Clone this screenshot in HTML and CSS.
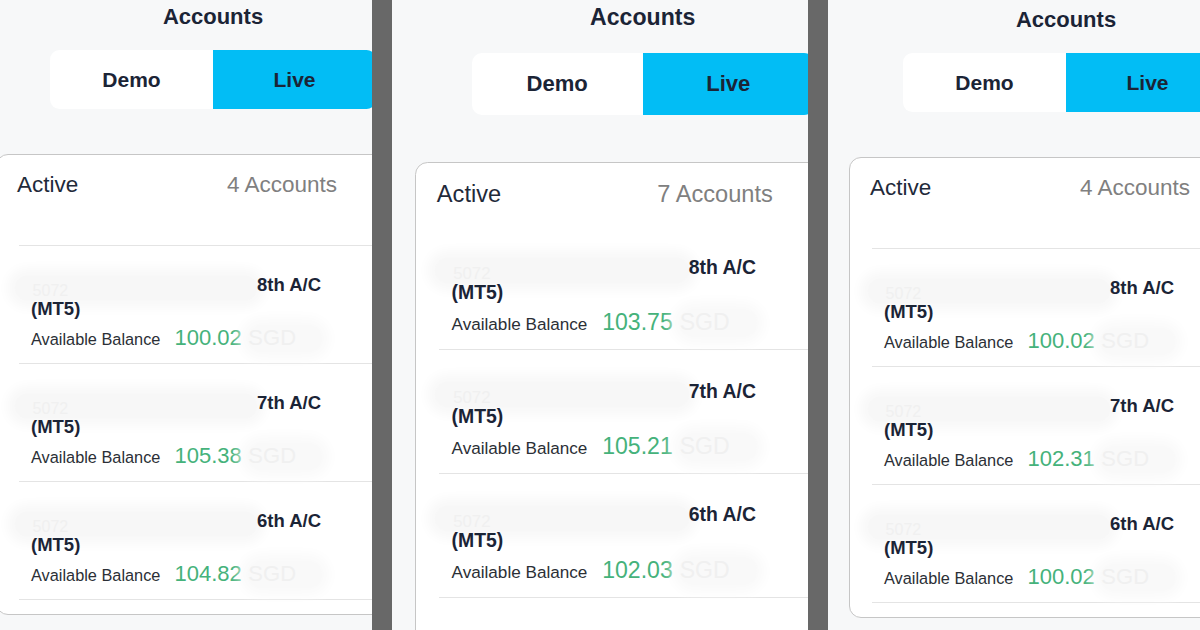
FILE: index.html
```html
<!DOCTYPE html>
<html lang="en">
<head>
<meta charset="utf-8">
<title>Accounts</title>
<link rel="stylesheet" href="styles.css">
</head>
<body>
<div class="strip">

  <section class="panel panel--left">
    <div class="screen">
      <h1 class="title">Accounts</h1>
      <div class="segment">
        <div class="seg seg--off">Demo</div>
        <div class="seg seg--on">Live</div>
      </div>
      <div class="card">
        <div class="card-head">
          <span class="head-label">Active</span>
          <span class="head-count">4 Accounts</span>
        </div>
        <ul class="rows">
          <li class="row">
            <div class="row-top"><span class="acct-id">5072</span><span class="acct-name">8th A/C</span></div>
            <div class="platform">(MT5)</div>
            <div class="bal"><span class="bal-label">Available Balance</span><span class="bal-amt">100.02</span><span class="bal-cur">SGD</span></div>
          </li>
          <li class="row">
            <div class="row-top"><span class="acct-id">5072</span><span class="acct-name">7th A/C</span></div>
            <div class="platform">(MT5)</div>
            <div class="bal"><span class="bal-label">Available Balance</span><span class="bal-amt">105.38</span><span class="bal-cur">SGD</span></div>
          </li>
          <li class="row">
            <div class="row-top"><span class="acct-id">5072</span><span class="acct-name">6th A/C</span></div>
            <div class="platform">(MT5)</div>
            <div class="bal"><span class="bal-label">Available Balance</span><span class="bal-amt">104.82</span><span class="bal-cur">SGD</span></div>
          </li>
        </ul>
      </div>
    </div>
  </section>

  <section class="panel panel--mid">
    <div class="screen">
      <h1 class="title">Accounts</h1>
      <div class="segment">
        <div class="seg seg--off">Demo</div>
        <div class="seg seg--on">Live</div>
      </div>
      <div class="card">
        <div class="card-head">
          <span class="head-label">Active</span>
          <span class="head-count">7 Accounts</span>
        </div>
        <ul class="rows">
          <li class="row">
            <div class="row-top"><span class="acct-id">5072</span><span class="acct-name">8th A/C</span></div>
            <div class="platform">(MT5)</div>
            <div class="bal"><span class="bal-label">Available Balance</span><span class="bal-amt">103.75</span><span class="bal-cur">SGD</span></div>
          </li>
          <li class="row">
            <div class="row-top"><span class="acct-id">5072</span><span class="acct-name">7th A/C</span></div>
            <div class="platform">(MT5)</div>
            <div class="bal"><span class="bal-label">Available Balance</span><span class="bal-amt">105.21</span><span class="bal-cur">SGD</span></div>
          </li>
          <li class="row">
            <div class="row-top"><span class="acct-id">5072</span><span class="acct-name">6th A/C</span></div>
            <div class="platform">(MT5)</div>
            <div class="bal"><span class="bal-label">Available Balance</span><span class="bal-amt">102.03</span><span class="bal-cur">SGD</span></div>
          </li>
        </ul>
      </div>
    </div>
  </section>

  <section class="panel panel--right">
    <div class="screen">
      <h1 class="title">Accounts</h1>
      <div class="segment">
        <div class="seg seg--off">Demo</div>
        <div class="seg seg--on">Live</div>
      </div>
      <div class="card">
        <div class="card-head">
          <span class="head-label">Active</span>
          <span class="head-count">4 Accounts</span>
        </div>
        <ul class="rows">
          <li class="row">
            <div class="row-top"><span class="acct-id">5072</span><span class="acct-name">8th A/C</span></div>
            <div class="platform">(MT5)</div>
            <div class="bal"><span class="bal-label">Available Balance</span><span class="bal-amt">100.02</span><span class="bal-cur">SGD</span></div>
          </li>
          <li class="row">
            <div class="row-top"><span class="acct-id">5072</span><span class="acct-name">7th A/C</span></div>
            <div class="platform">(MT5)</div>
            <div class="bal"><span class="bal-label">Available Balance</span><span class="bal-amt">102.31</span><span class="bal-cur">SGD</span></div>
          </li>
          <li class="row">
            <div class="row-top"><span class="acct-id">5072</span><span class="acct-name">6th A/C</span></div>
            <div class="platform">(MT5)</div>
            <div class="bal"><span class="bal-label">Available Balance</span><span class="bal-amt">100.02</span><span class="bal-cur">SGD</span></div>
          </li>
        </ul>
      </div>
    </div>
  </section>

</div>
</body>
</html>
```
FILE: styles.css
```css
html, body {
  margin: 0;
  padding: 0;
}

body {
  background: #686868;
  font-family: "Liberation Sans", Arial, "Helvetica Neue", sans-serif;
  color: #1b2436;
  width: 1200px;
  height: 630px;
  overflow: hidden;
}

.strip {
  display: grid;
  grid-template-columns: 372px 416px 372px;
  column-gap: 20px;
  height: 630px;
}

.panel {
  background: #f7f8f9;
  overflow: hidden;
  font-size: 16px;
  height: 630px;
}

.panel--left .screen { margin-left: -0.25em; }
.panel--right { padding-top: 3px; }
.panel--right .screen { margin-left: 1.3125em; }
.panel--mid { font-size: 16.8px; }
.panel--mid .screen { margin-left: 1.36em; }

.screen {
  width: 27.125em;
}

.title {
  margin: 0;
  padding-top: 0.1875em;
  font-size: 1.375em;
  line-height: 1.18em;
  font-weight: 700;
  text-align: center;
  color: #1b2436;
}

.segment {
  display: flex;
  margin: 1.25em 0 0 3.375em;
  width: 20.375em;
  height: 3.6875em;
}

.seg {
  flex: 1;
  display: flex;
  align-items: center;
  justify-content: center;
  font-size: 1.3125em;
  font-weight: 700;
  color: #1b2436;
}

.seg--off {
  background: #ffffff;
  border-radius: 0.45em 0 0 0.45em;
}

.seg--on {
  background: #02bdf5;
  border-radius: 0 0.45em 0.45em 0;
}

.card {
  margin-top: 2.8125em;
  width: 30em;
  background: #ffffff;
  border: 1px solid #c6c6c6;
  border-radius: 0.75em;
  padding-bottom: 0.875em;
}

.panel--mid .card { padding-bottom: 4em; }

.card-head {
  display: flex;
  justify-content: space-between;
  align-items: center;
  padding: 1em 6em 2.875em 1.25em;
  width: 20em;
}

.panel--mid .card-head { padding-bottom: 0.97em; }

.head-label,
.head-count {
  font-size: 1.40625em;
  line-height: 1.245em;
}

.head-label { color: #1f2a3a; }
.head-count { color: #808080; }

.rows {
  list-style: none;
  margin: 0 0 0 1.375em;
  padding: 0;
}

.row {
  border-top: 1px solid #e4e4e4;
  padding: 1.6875em 0 0.625em 0.75em;
}

.row:last-child { border-bottom: 1px solid #e4e4e4; }
.panel--mid .row:first-child { border-top-color: transparent; }

.row-top {
  display: flex;
  align-items: center;
  height: 1.5em;
}

.acct-id {
  flex: 0 0 15.125em;
  margin-left: -1em;
  height: 1.5em;
  margin-top: 0.4em;
  border-radius: 1em;
  background: #f7f7f7;
  box-shadow: 0 0 12px 8px #f8f8f8;
  color: #f0f0f0;
  font-size: 1em;
  line-height: 1.9em;
  padding-left: 1.1em;
  box-sizing: border-box;
}

.acct-name {
  font-size: 1.15625em;
  font-weight: 700;
  color: #1b2436;
}

.platform {
  font-size: 1.15625em;
  line-height: 1.3em;
  font-weight: 700;
  color: #1b2436;
  position: relative;
}

.bal {
  display: flex;
  align-items: baseline;
  margin-top: 0.125em;
  height: 1.875em;
  line-height: 1.875em;
}

.bal-label {
  font-size: 1.02em;
  color: #2b2f36;
}

.bal-amt {
  margin-left: 0.64em;
  font-size: 1.375em;
  color: #45b27b;
}

.bal-cur {
  margin-left: 0.3em;
  font-size: 1.375em;
  color: #f0f0f0;
  background: #f9f9f9;
  box-shadow: 0 0 12px 8px #fafafa;
  border-radius: 1em;
  padding-right: 1.2em;
  line-height: 1.2em;
}
```
